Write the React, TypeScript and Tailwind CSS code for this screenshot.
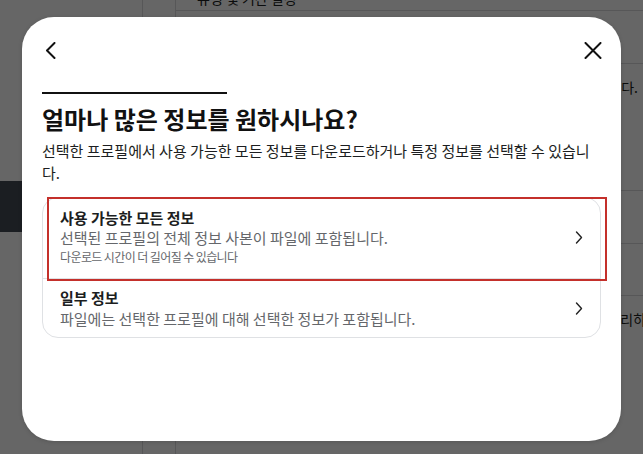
import React from 'react';

const FONT = "font-['Noto_Sans_CJK_KR','Noto_Sans',sans-serif]";

function BackIcon() {
  return (
    <svg width="12" height="17" viewBox="0 0 12 17" fill="none" className="ml-[2px]">
      <path d="M10.5 1 3 8.5 10.5 16" stroke="#111" strokeWidth="2" strokeLinecap="round" strokeLinejoin="round" />
    </svg>
  );
}

function CloseIcon() {
  return (
    <svg width="18" height="17" viewBox="0 0 18 17" fill="none" className="mr-[-1px]">
      <path d="M1.5 1 16.5 16M16.5 1 1.5 16" stroke="#111" strokeWidth="2" strokeLinecap="round" />
    </svg>
  );
}

function ChevronRight() {
  return (
    <svg width="8" height="13" viewBox="0 0 8 13" fill="none" className="shrink-0">
      <path d="M1.5 1 6.5 6.5 1.5 12" stroke="#222" strokeWidth="1.4" strokeLinecap="round" strokeLinejoin="round" />
    </svg>
  );
}

function BackgroundPage() {
  return (
    <div className="flex h-full w-full bg-white">
      {/* sidebar */}
      <aside className="w-[143px] shrink-0 border-r border-[#d9dadc]">
        <div className="h-[181px]" />
        <div className="h-[51px] bg-[#454d56]" />
      </aside>
      <div className="w-[33px] shrink-0 border-r border-[#d9dadc]" />
      <main className="flex-1">
        <div className="h-[23px] border-b border-[#d9dadc] pl-[21px]">
          <p className="mt-[-12px] text-[14px] text-[#1c1e21]">유형 및 기간 설정</p>
        </div>
        <div className="h-[53px] border-b border-[#d9dadc]" />
        <div className="flex h-[127px] justify-end border-b border-[#d9dadc] pt-[13px] pr-[5px]">
          <p className="text-[14px] text-[#1c1e21]">니다.</p>
        </div>
        <div className="h-[53px] border-b border-[#d9dadc]" />
        <div className="h-[52px] border-b border-[#d9dadc]" />
        <div className="flex justify-end pt-[13px]">
          <p className="mr-[-16px] text-[14px] text-[#1c1e21]">관리하기</p>
        </div>
      </main>
    </div>
  );
}

export default function App() {
  return (
    <div className={`relative h-[454px] w-[643px] overflow-hidden ${FONT}`}>
      <BackgroundPage />

      {/* dialog overlay */}
      <div className="absolute inset-0 flex items-start justify-center bg-black/60 pt-[17px]">
        <div className="h-[424px] w-[599px] rounded-[32px] bg-white px-5 pt-[25px] shadow-[0_1px_4px_rgba(0,0,0,0.15)]">
          <div className="flex h-[17px] items-center justify-between">
            <BackIcon />
            <CloseIcon />
          </div>

          <div className="mt-[33px] h-[2px] w-[185px] bg-[#111]" />

          <h2 className="mt-[10px] text-[24px] leading-[30px] font-bold text-[#111]">얼마나 많은 정보를 원하시나요?</h2>
          <p className="mt-[6px] text-[15px] leading-[22px] text-[#1c1e21]">
            선택한 프로필에서 사용 가능한 모든 정보를 다운로드하거나 특정 정보를 선택할 수 있습니다.
          </p>

          <div className="mt-[13px] rounded-[16px] border border-[#dfe1e4]">
            <div className="relative flex items-center border-b border-[#dfe1e4] pt-[10px] pr-[17px] pb-[12px] pl-[17px]">
              <div className="flex-1">
                <p className="text-[15px] leading-[20px] font-semibold text-[#1c1e21]">사용 가능한 모든 정보</p>
                <p className="text-[15px] leading-[20px] text-[#65676b]">선택된 프로필의 전체 정보 사본이 파일에 포함됩니다.</p>
                <p className="text-[12px] leading-[18px] tracking-[-0.6px] text-[#65676b]">다운로드 시간이 더 길어질 수 있습니다</p>
              </div>
              <ChevronRight />
              <div className="pointer-events-none absolute top-[-1px] right-[-7px] bottom-[-3px] left-[4px] border-2 border-[#c4302b]" />
            </div>
            <div className="flex items-center pt-[8px] pr-[17px] pb-[8px] pl-[17px]">
              <div className="flex-1">
                <p className="text-[15px] leading-[22px] font-semibold text-[#1c1e21]">일부 정보</p>
                <p className="text-[15px] leading-[20px] text-[#65676b]">파일에는 선택한 프로필에 대해 선택한 정보가 포함됩니다.</p>
              </div>
              <ChevronRight />
            </div>
          </div>
        </div>
      </div>
    </div>
  );
}
